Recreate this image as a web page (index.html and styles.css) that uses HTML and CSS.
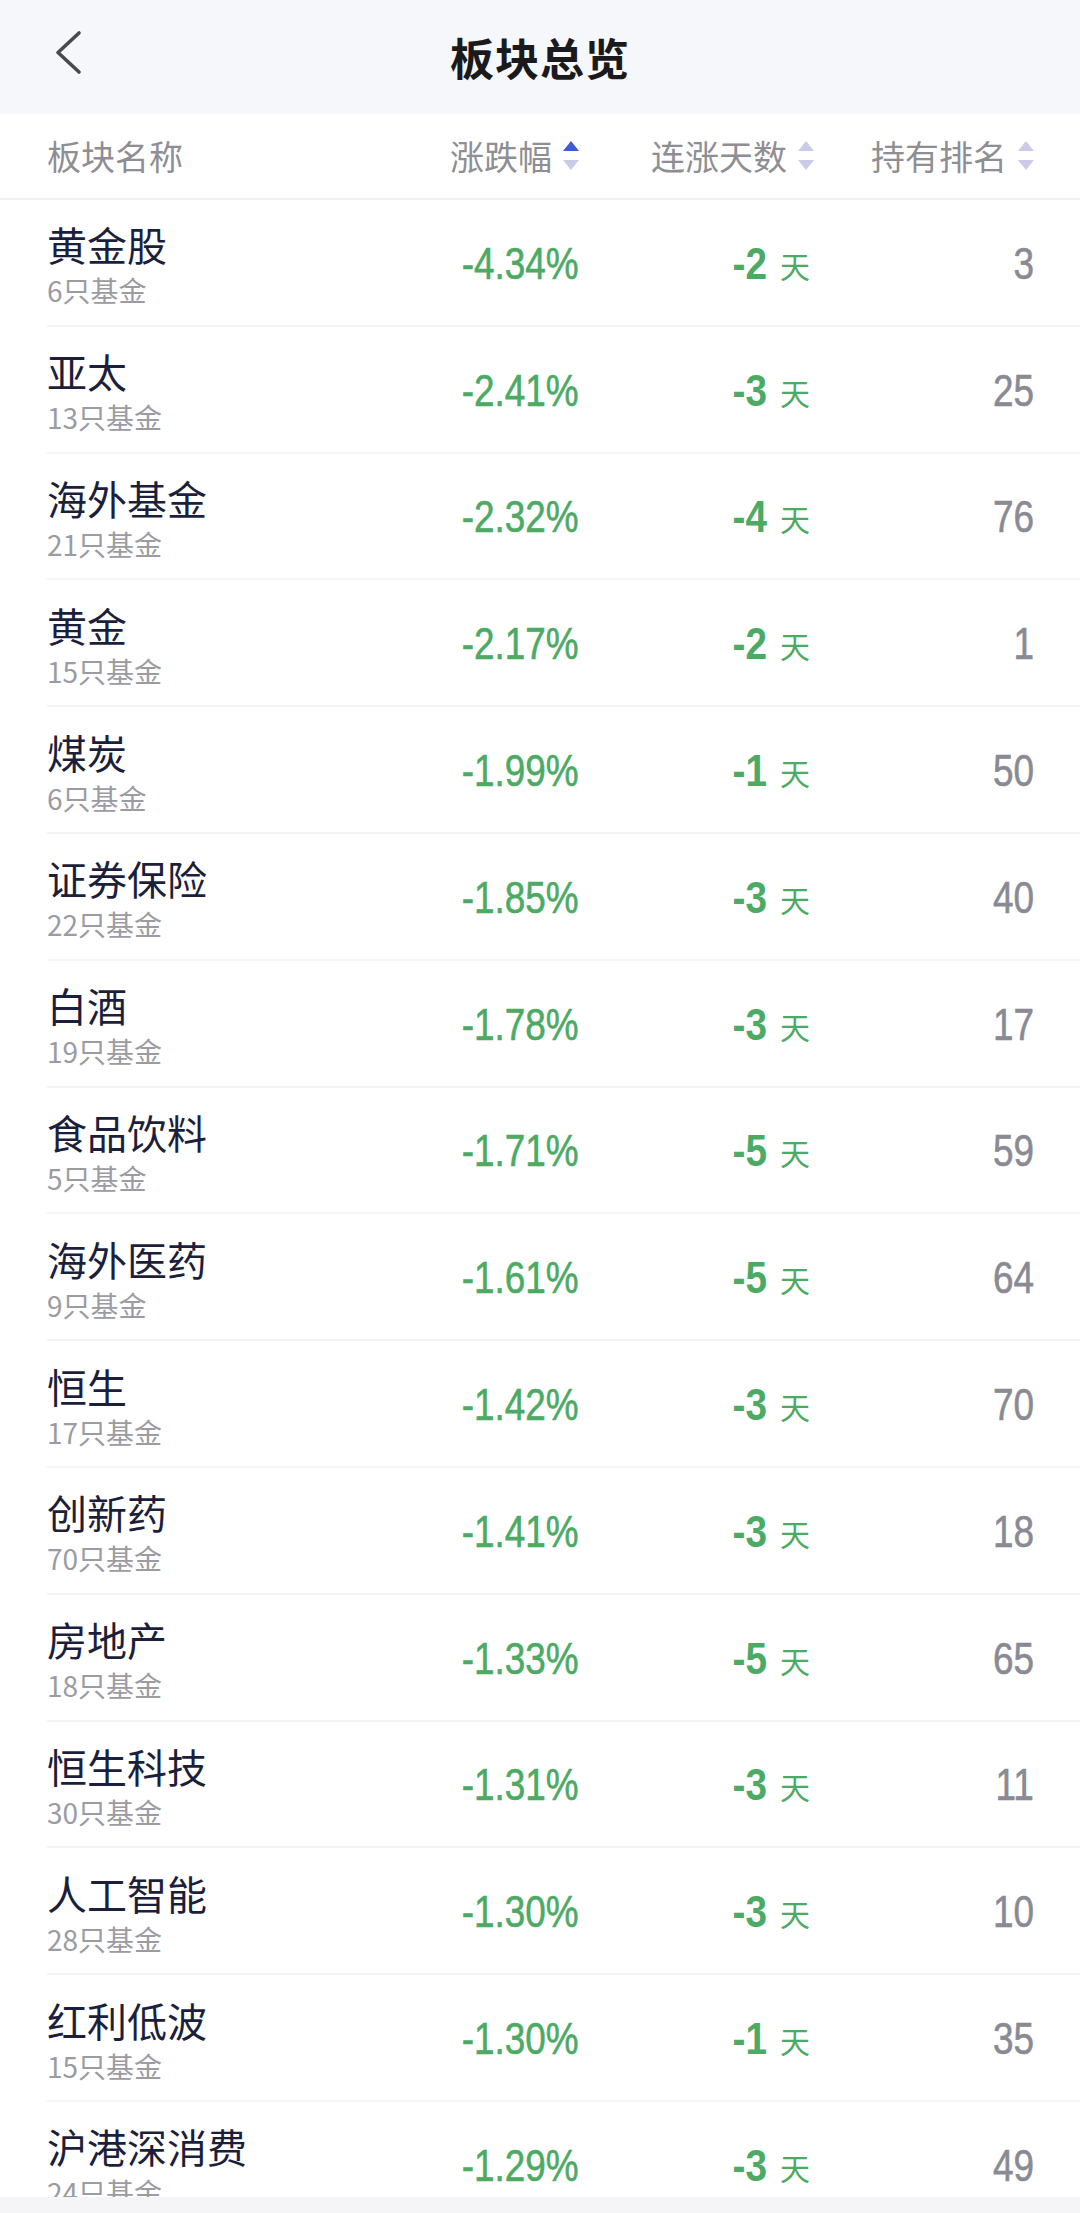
FILE: index.html
```html
<!DOCTYPE html>
<html lang="zh-CN">
<head>
<meta charset="utf-8">
<title>板块总览</title>
<link rel="stylesheet" href="styles.css">
</head>
<body>
<div class="page">
  <header class="topbar">
    <svg class="back" width="30" height="46" viewBox="0 0 30 46"><polyline points="25,3 4,22.5 25,42" fill="none" stroke="#4a4a4e" stroke-width="3.6" stroke-linecap="round" stroke-linejoin="round"/></svg>
    <h1 class="title">板块总览</h1>
  </header>

  <div class="thead">
    <div class="th th-name">板块名称</div>
    <div class="th th-num">涨跌幅<svg class="sort" width="16" height="30" viewBox="0 0 16 30"><polygon points="8,0 16,10 0,10" fill="#3d5bd8"/><polygon points="0,19 16,19 8,29" fill="#c9cbe8"/></svg></div>
    <div class="th th-num">连涨天数<svg class="sort" width="16" height="30" viewBox="0 0 16 30"><polygon points="8,0 16,10 0,10" fill="#c9cbe8"/><polygon points="0,19 16,19 8,29" fill="#c9cbe8"/></svg></div>
    <div class="th th-num">持有排名<svg class="sort" width="16" height="30" viewBox="0 0 16 30"><polygon points="8,0 16,10 0,10" fill="#c9cbe8"/><polygon points="0,19 16,19 8,29" fill="#c9cbe8"/></svg></div>
  </div>

  <div class="list">
    <div class="row"><div class="name"><div class="n">黄金股</div><div class="s">6只基金</div></div><div class="pct"><span class="num">-4.34%</span></div><div class="days"><span class="num">-2</span><span class="d">天</span></div><div class="rank"><span class="num">3</span></div></div>
    <div class="row"><div class="name"><div class="n">亚太</div><div class="s">13只基金</div></div><div class="pct"><span class="num">-2.41%</span></div><div class="days"><span class="num">-3</span><span class="d">天</span></div><div class="rank"><span class="num">25</span></div></div>
    <div class="row"><div class="name"><div class="n">海外基金</div><div class="s">21只基金</div></div><div class="pct"><span class="num">-2.32%</span></div><div class="days"><span class="num">-4</span><span class="d">天</span></div><div class="rank"><span class="num">76</span></div></div>
    <div class="row"><div class="name"><div class="n">黄金</div><div class="s">15只基金</div></div><div class="pct"><span class="num">-2.17%</span></div><div class="days"><span class="num">-2</span><span class="d">天</span></div><div class="rank"><span class="num">1</span></div></div>
    <div class="row"><div class="name"><div class="n">煤炭</div><div class="s">6只基金</div></div><div class="pct"><span class="num">-1.99%</span></div><div class="days"><span class="num">-1</span><span class="d">天</span></div><div class="rank"><span class="num">50</span></div></div>
    <div class="row"><div class="name"><div class="n">证券保险</div><div class="s">22只基金</div></div><div class="pct"><span class="num">-1.85%</span></div><div class="days"><span class="num">-3</span><span class="d">天</span></div><div class="rank"><span class="num">40</span></div></div>
    <div class="row"><div class="name"><div class="n">白酒</div><div class="s">19只基金</div></div><div class="pct"><span class="num">-1.78%</span></div><div class="days"><span class="num">-3</span><span class="d">天</span></div><div class="rank"><span class="num">17</span></div></div>
    <div class="row"><div class="name"><div class="n">食品饮料</div><div class="s">5只基金</div></div><div class="pct"><span class="num">-1.71%</span></div><div class="days"><span class="num">-5</span><span class="d">天</span></div><div class="rank"><span class="num">59</span></div></div>
    <div class="row"><div class="name"><div class="n">海外医药</div><div class="s">9只基金</div></div><div class="pct"><span class="num">-1.61%</span></div><div class="days"><span class="num">-5</span><span class="d">天</span></div><div class="rank"><span class="num">64</span></div></div>
    <div class="row"><div class="name"><div class="n">恒生</div><div class="s">17只基金</div></div><div class="pct"><span class="num">-1.42%</span></div><div class="days"><span class="num">-3</span><span class="d">天</span></div><div class="rank"><span class="num">70</span></div></div>
    <div class="row"><div class="name"><div class="n">创新药</div><div class="s">70只基金</div></div><div class="pct"><span class="num">-1.41%</span></div><div class="days"><span class="num">-3</span><span class="d">天</span></div><div class="rank"><span class="num">18</span></div></div>
    <div class="row"><div class="name"><div class="n">房地产</div><div class="s">18只基金</div></div><div class="pct"><span class="num">-1.33%</span></div><div class="days"><span class="num">-5</span><span class="d">天</span></div><div class="rank"><span class="num">65</span></div></div>
    <div class="row"><div class="name"><div class="n">恒生科技</div><div class="s">30只基金</div></div><div class="pct"><span class="num">-1.31%</span></div><div class="days"><span class="num">-3</span><span class="d">天</span></div><div class="rank"><span class="num">11</span></div></div>
    <div class="row"><div class="name"><div class="n">人工智能</div><div class="s">28只基金</div></div><div class="pct"><span class="num">-1.30%</span></div><div class="days"><span class="num">-3</span><span class="d">天</span></div><div class="rank"><span class="num">10</span></div></div>
    <div class="row"><div class="name"><div class="n">红利低波</div><div class="s">15只基金</div></div><div class="pct"><span class="num">-1.30%</span></div><div class="days"><span class="num">-1</span><span class="d">天</span></div><div class="rank"><span class="num">35</span></div></div>
    <div class="row"><div class="name"><div class="n">沪港深消费</div><div class="s">24只基金</div></div><div class="pct"><span class="num">-1.29%</span></div><div class="days"><span class="num">-3</span><span class="d">天</span></div><div class="rank"><span class="num">49</span></div></div>
  </div>

  <div class="bottombar"></div>
</div>
</body>
</html>
```

FILE: styles.css
```css
* { box-sizing: border-box; }
html, body {
  margin: 0;
  padding: 0;
  background: #ffffff;
}
body {
  width: 1080px;
  height: 2213px;
  overflow: hidden;
  font-family: "Noto Sans CJK SC", "Noto Sans", sans-serif;
}
.page {
  width: 1080px;
  height: 2213px;
  overflow: hidden;
  position: relative;
}
.topbar {
  height: 114px;
  background: #f6f7fb;
  display: flex;
  align-items: center;
  justify-content: center;
  position: relative;
}
.back {
  position: absolute;
  left: 54px;
  top: 30px;
}
.title {
  margin: 0;
  font-size: 44px;
  font-weight: 700;
  color: #1a1a1c;
  line-height: 1;
  letter-spacing: 1px;
}
.thead {
  height: 86px;
  display: grid;
  grid-template-columns: 1fr 236px 235px 220px;
  align-items: center;
  padding: 0 46px 0 47px;
  border-bottom: 2px solid #f1f1f4;
}
.th {
  font-size: 34px;
  color: #8e8e94;
  line-height: 1;
  display: flex;
  align-items: center;
}
.th-num {
  justify-content: flex-end;
}
.sort {
  margin-left: 11px;
  display: block;
}
.row {
  height: 126.8px;
  display: grid;
  grid-template-columns: 1fr 236px 235px 220px;
  align-items: center;
  padding: 0 46px 0 0;
  margin-left: 47px;
  border-bottom: 2px solid #f4f4f6;
}
.name {
  padding-top: 4px;
}
.n {
  font-size: 40px;
  line-height: 52px;
  color: #1c1f3b;
}
.s {
  font-size: 28px;
  line-height: 40px;
  color: #9b9ba3;
}
.pct, .days, .rank {
  text-align: right;
  line-height: 1;
  padding-top: 2px;
  white-space: nowrap;
}
.num {
  display: inline-block;
  font-family: "Liberation Sans", Arial, sans-serif;
  font-size: 45px;
  transform: scaleX(0.82);
  transform-origin: right center;
  -webkit-text-stroke: 0.6px currentColor;
}
.pct, .days {
  color: #4caa64;
}
.rank {
  color: #8a8a94;
}
.days {
  padding-right: 4px;
}
.days .num {
  font-weight: 700;
  transform: scaleX(0.86);
  -webkit-text-stroke: 0;
}
.d {
  font-family: "Noto Sans CJK SC", sans-serif;
  font-weight: 400;
  font-size: 30px;
  margin-left: 13px;
  position: relative;
  top: -1px;
}
.bottombar {
  position: absolute;
  left: 0;
  right: 0;
  bottom: 0;
  height: 16px;
  background: #f5f5f7;
}
```
